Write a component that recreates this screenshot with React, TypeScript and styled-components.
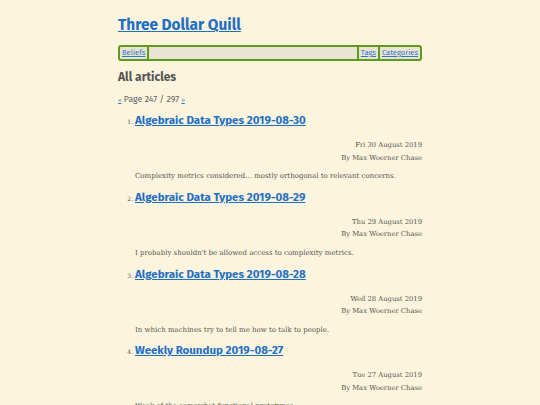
import React from "react";
import styled, { createGlobalStyle } from "styled-components";

const Global = createGlobalStyle`
  html, body { margin: 0; padding: 0; background: #fcf4dc; }
  body { font-family: "DejaVu Serif", serif; color: #555; }
`;

const Page = styled.div`
  width: 304px;
  margin: 0 auto;
  padding-top: 14px;
`;

const SiteTitle = styled.h1`
  margin: 0;
  font-family: "Fira Sans", "Open Sans", sans-serif;
  font-size: 15.4px;
  font-weight: 700;
  line-height: 22px;
  a { color: #1f6fc5; text-decoration: underline; }
`;

const Nav = styled.nav`
  margin-top: 9px;
  display: flex;
  align-items: stretch;
  border: 2px solid #5f9a1c;
  border-radius: 3px;
  background: #e9e3d1;
  height: 12px;
  font-family: "Fira Sans", "Open Sans", sans-serif;
  font-size: 7.6px;
  line-height: 12px;
`;

const NavItem = styled.a<{ $side?: "left" | "right" }>`
  color: #2f78c8;
  text-decoration: underline;
  padding: 0 2px;
  ${(p) => (p.$side === "left" ? "border-right: 2px solid #5f9a1c;" : "border-left: 2px solid #5f9a1c;")}
`;

const Spacer = styled.div`
  flex: 1;
`;

const Heading = styled.h2`
  margin: 8px 0 0;
  font-family: "Fira Sans", "Open Sans", sans-serif;
  font-size: 12px;
  font-weight: 700;
  line-height: 16px;
  color: #555;
`;

const Pager = styled.div`
  margin-top: 9px;
  font-family: "Fira Sans", "Open Sans", sans-serif;
  font-size: 8.8px;
  line-height: 10px;
  color: #666;
  a { color: #2f78c8; font-size: 6px; }
`;

const List = styled.ol`
  margin: 7px 0 0;
  padding-left: 17px;
  font-size: 6px;
  color: #555;
`;

const Item = styled.li`
  height: 76.8px;
`;

const ItemTitle = styled.h3`
  margin: 0;
  display: inline;
  font-family: "Fira Sans", "Open Sans", sans-serif;
  font-size: 11.5px;
  font-weight: 700;
  line-height: 16px;
  a { color: #1f6fc5; text-decoration: underline; }
`;

const Meta = styled.div`
  margin-top: 11px;
  text-align: right;
  font-size: 6.8px;
  line-height: 12.5px;
  color: #555;
`;

const Summary = styled.p`
  margin: 6px 0 0;
  font-size: 7px;
  line-height: 12px;
  color: #555;
`;

const articles = [
  { title: "Algebraic Data Types 2019-08-30", date: "Fri 30 August 2019", summary: "Complexity metrics considered... mostly orthogonal to relevant concerns." },
  { title: "Algebraic Data Types 2019-08-29", date: "Thu 29 August 2019", summary: "I probably shouldn't be allowed access to complexity metrics." },
  { title: "Algebraic Data Types 2019-08-28", date: "Wed 28 August 2019", summary: "In which machines try to tell me how to talk to people." },
  { title: "Weekly Roundup 2019-08-27", date: "Tue 27 August 2019", summary: "Week of the somewhat functional prototypes." },
];

export default function App() {
  return (
    <>
      <Global />
      <Page>
        <SiteTitle><a href="#">Three Dollar Quill</a></SiteTitle>
        <Nav>
          <NavItem $side="left" href="#">Beliefs</NavItem>
          <Spacer />
          <NavItem href="#">Tags</NavItem>
          <NavItem href="#">Categories</NavItem>
        </Nav>
        <Heading>All articles</Heading>
        <Pager><a href="#">«</a> Page 247 / 297 <a href="#">»</a></Pager>
        <List>
          {articles.map((a) => (
            <Item key={a.title}>
              <ItemTitle><a href="#">{a.title}</a></ItemTitle>
              <Meta>
                <div>{a.date}</div>
                <div>By Max Woerner Chase</div>
              </Meta>
              <Summary>{a.summary}</Summary>
            </Item>
          ))}
        </List>
      </Page>
    </>
  );
}
